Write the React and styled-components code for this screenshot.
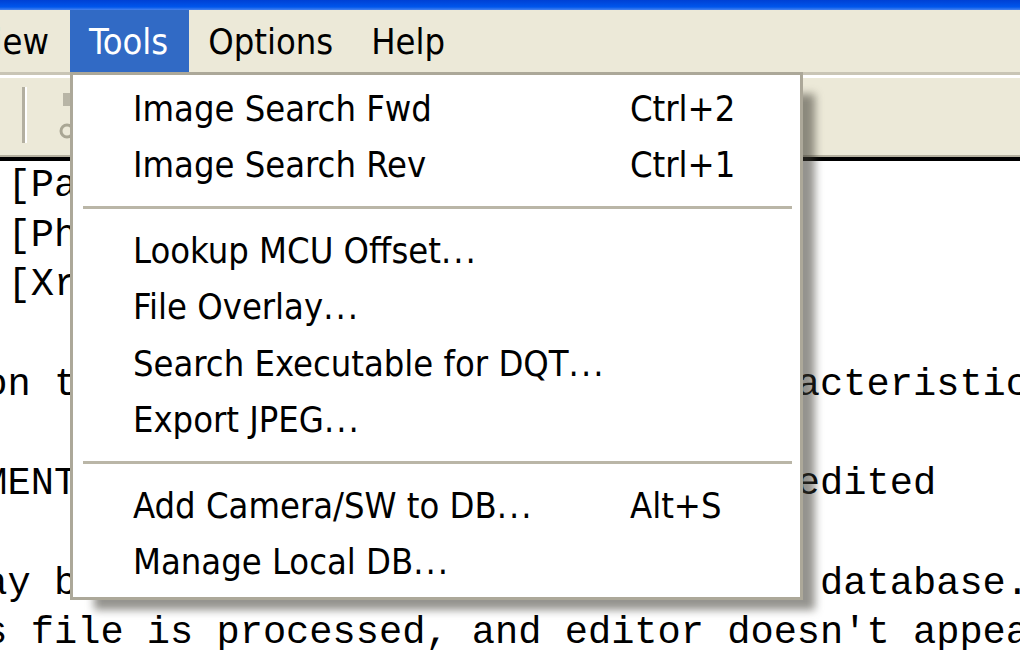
import React from 'react';
import styled, { createGlobalStyle } from 'styled-components';

const GlobalStyle = createGlobalStyle`
  html, body {
    margin: 0;
    padding: 0;
    background: #fff;
  }
  body {
    width: 1020px;
    height: 650px;
    overflow: hidden;
  }
`;

const Window = styled.div`
  position: relative;
  width: 1020px;
  height: 650px;
  overflow: hidden;
  display: flex;
  flex-direction: column;
  background: #fff;
  font-family: "DejaVu Sans Condensed", "Liberation Sans", sans-serif;
`;

const TitleEdge = styled.div`
  flex: none;
  height: 10px;
  background: linear-gradient(#0040d4, #0056ec 70%, #4a84ee);
`;

const MenuBar = styled.div`
  flex: none;
  height: 62px;
  display: flex;
  background: #ece9d8;
`;

const ClippedMenus = styled.div`
  width: 70px;
  display: flex;
  justify-content: flex-end;
  overflow: hidden;
`;

const MenuTitle = styled.div`
  display: flex;
  align-items: center;
  padding: 0 ${(p) => (p.$last ? '21px' : '19px')} 0 19px;
  font-size: 36px;
  white-space: nowrap;
  color: ${(p) => (p.$open ? '#fff' : '#000')};
  background: ${(p) => (p.$open ? '#316ac5' : 'transparent')};
`;

const OpenTitle = styled(MenuTitle)`
  padding: 0 21px 0 19px;
`;

const ToolBar = styled.div`
  flex: none;
  height: 80px;
  display: flex;
  align-items: center;
  background: #ece9d8;
  border-top: 3px solid #c9c5b5;
  border-bottom: 2px solid #b4b09f;
  box-shadow: inset 0 3px 0 #fff;
`;

const ToolSeparator = styled.div`
  width: 3px;
  height: 56px;
  margin-left: 22px;
  background: #b3afa0;
  border-right: 2px solid #fff;
`;

const ToolButton = styled.div`
  display: flex;
  margin-left: 31px;
`;

const TextPane = styled.div`
  flex: 1;
  min-height: 0;
  overflow: hidden;
  background: #fff;
  border-top: 4px solid #000;
`;

const LogText = styled.pre`
  margin: 1px 0 0 -155px;
  font-family: "Liberation Mono", "Courier New", monospace;
  font-size: 38.7px;
  line-height: 49.7px;
  color: #000;
  white-space: pre;
`;

const DropLayer = styled.div`
  position: absolute;
  left: 70px;
  top: 72px;
  z-index: 2;
`;

const DropShadow = styled.div`
  position: absolute;
  left: 24px;
  top: 22px;
  right: -12px;
  bottom: -10px;
  background: rgba(60, 58, 50, 0.55);
  filter: blur(4px);
`;

const DropPanel = styled.div`
  position: relative;
  width: 733px;
  box-sizing: border-box;
  padding: 5px 0 7px;
  background: #fff;
  border: 3px solid #aca899;
`;

const Item = styled.div`
  display: grid;
  grid-template-columns: 497px auto;
  align-items: center;
  height: 56.5px;
  padding-left: 60px;
  font-size: 36px;
  color: #000;
  white-space: nowrap;
`;

const Ellipsis = styled.span`
  letter-spacing: 2px;
`;

const Separator = styled.div`
  height: 3px;
  margin: 13px 8px 13px 10px;
  background: #bab6a7;
`;

const logLines = [
  '       [Paint Shop Pro]',
  '       [Photoshop]',
  '       [Xrite Editor]',
  '',
  'Based on the analysis of compression characteristics and EXIF metadata:',
  '',
  'ASSESSMENT: Class 1 - Image is processed/edited',
  '',
  'This may be a new software editor for the database.',
  "If this file is processed, and editor doesn't appear in list above,",
  'PLEASE ADD TO DATABASE with [Tools->Add Camera to DB]',
];

const toolsMenu = [
  { label: 'Image Search Fwd', key: 'Ctrl+2' },
  { label: 'Image Search Rev', key: 'Ctrl+1' },
  null,
  { label: 'Lookup MCU Offset', more: true },
  { label: 'File Overlay', more: true },
  { label: 'Search Executable for DQT', more: true },
  { label: 'Export JPEG', more: true },
  null,
  { label: 'Add Camera/SW to DB', more: true, key: 'Alt+S' },
  { label: 'Manage Local DB', more: true },
];

const App = () => {
  return (
    <>
      <GlobalStyle />
      <Window>
        <TitleEdge />
        <MenuBar>
          <ClippedMenus>
            <MenuTitle>File</MenuTitle>
            <MenuTitle>Edit</MenuTitle>
            <MenuTitle $last>View</MenuTitle>
          </ClippedMenus>
          <OpenTitle $open>Tools</OpenTitle>
          <MenuTitle>Options</MenuTitle>
          <MenuTitle>Help</MenuTitle>
        </MenuBar>
        <ToolBar>
          <ToolSeparator />
          <ToolButton>
            <svg width="44" height="48" viewBox="0 0 44 48">
              <rect x="5" y="2" width="8" height="13" fill="#b8b5a6" />
              <circle cx="9" cy="40" r="6" fill="none" stroke="#a9a694" strokeWidth="3" />
            </svg>
          </ToolButton>
        </ToolBar>
        <TextPane>
          <LogText>{logLines.join('\n')}</LogText>
        </TextPane>

        <DropLayer>
          <DropShadow />
          <DropPanel>
            {toolsMenu.map((item, i) =>
              item ? (
                <Item key={i}>
                  <span>
                    {item.label}
                    {item.more && <Ellipsis>...</Ellipsis>}
                  </span>
                  <span>{item.key}</span>
                </Item>
              ) : (
                <Separator key={i} />
              )
            )}
          </DropPanel>
        </DropLayer>
      </Window>
    </>
  );
};

export default App;
